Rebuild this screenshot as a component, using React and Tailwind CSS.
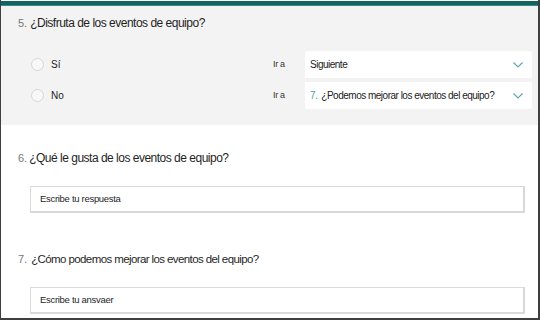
function Chevron() {
  return (
    <svg width="10" height="6" viewBox="0 0 10 6" className="shrink-0">
      <path d="M0.5 0.5 L5 5 L9.5 0.5" fill="none" stroke="#5ea7ab" strokeWidth="1.1" />
    </svg>
  );
}

function ChoiceRow({ label, children }) {
  return (
    <div className="flex h-[27px] items-center">
      <div className="flex w-[272px] items-center pl-[30px]">
        <span className="h-[13px] w-[13px] rounded-full border border-[#d6d6d6] bg-[#f8f8f8]" />
        <span className="ml-[7px] text-[10px] text-[#222]">{label}</span>
      </div>
      <span className="w-[32px] text-[9px] tracking-[-0.3px] text-[#333]">Ir a</span>
      <div className="flex h-[27px] w-[227px] items-center justify-between bg-white pl-[5px] pr-[9px] text-[10px] tracking-[-0.5px] text-[#222]">
        <span className="whitespace-nowrap">{children}</span>
        <Chevron />
      </div>
    </div>
  );
}

function TextQuestion({ num, title, placeholder, titleClass }) {
  return (
    <div className="px-[17px]">
      <div className="flex items-baseline">
        <span className="text-[11px] text-[#777]">{num}</span>
        <span className={"ml-[2px] text-[#1f1f1f] " + titleClass}>{title}</span>
      </div>
      <div className="ml-[12px] mt-[19px] flex h-[27px] w-[495px] items-center border border-[#d9d9d9] border-b-2 border-r-2 bg-white pl-[9px] text-[9.5px] tracking-[-0.3px] text-[#1f1f1f]">
        {placeholder}
      </div>
    </div>
  );
}

export default function App() {
  return (
    <div className="h-[320px] w-[540px] overflow-hidden border-b-2 border-l border-r-2 border-[#3f3f3f] bg-white font-['Liberation_Sans',Arial,sans-serif]">
      <div className="h-[1px] bg-white" />
      <div className="h-[5px] border-b border-[#2a8f8a] bg-[#16625f]" />
      <div className="h-[119px] bg-[#f3f3f3] pt-[8px]">
        <div className="flex items-baseline px-[17px]">
          <span className="text-[11px] text-[#777]">5.</span>
          <span className="ml-[3px] text-[12px] tracking-[-0.5px] text-[#1f1f1f]">¿Disfruta de los eventos de equipo?</span>
        </div>
        <div className="mt-[19px] flex flex-col gap-[4px]">
          <ChoiceRow label="Sí">Siguiente</ChoiceRow>
          <ChoiceRow label="No">
            <span className="text-[#4f9ea3]">7.</span>
            <span className="ml-[4px]">¿Podemos mejorar los eventos del equipo?</span>
          </ChoiceRow>
        </div>
      </div>
      <div className="pt-[24px]">
        <TextQuestion
          num="6."
          title="¿Qué le gusta de los eventos de equipo?"
          placeholder="Escribe tu respuesta"
          titleClass="text-[12px] tracking-[-0.5px]"
        />
      </div>
      <div className="pt-[38px]">
        <TextQuestion
          num="7."
          title="¿Cómo podemos mejorar los eventos del equipo?"
          placeholder="Escribe tu ansvaer"
          titleClass="ml-[4px] text-[11.5px] tracking-[-0.6px]"
        />
      </div>
    </div>
  );
}
